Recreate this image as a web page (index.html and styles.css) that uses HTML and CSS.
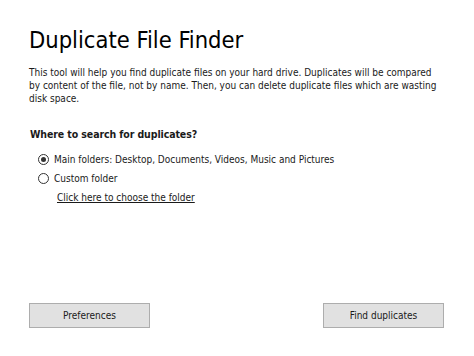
FILE: index.html
```html
<!DOCTYPE html>
<html lang="en">
<head>
    <meta charset="UTF-8">
    <title>Duplicate File Finder</title>
    <link rel="stylesheet" href="styles.css">
</head>
<body>
    <div class="window">
        <h1>Duplicate File Finder</h1>
        <p class="intro">This tool will help you find duplicate files on your hard drive. Duplicates will be compared by content of the file, not by name. Then, you can delete duplicate files which are wasting disk space.</p>

        <h2>Where to search for duplicates?</h2>
        <div class="options">
            <label class="option">
                <span class="radio checked"></span>
                Main folders: Desktop, Documents, Videos, Music and Pictures
            </label>
            <label class="option">
                <span class="radio"></span>
                Custom folder
            </label>
            <a class="choose-link" href="#">Click here to choose the folder</a>
        </div>

        <div class="footer">
            <button class="btn">Preferences</button>
            <button class="btn">Find duplicates</button>
        </div>
    </div>
</body>
</html>
```

FILE: styles.css
```css
html, body {
    margin: 0;
    height: 100%;
    background-color: white;
}
body {
    font-family: Tahoma, 'DejaVu Sans Condensed', 'DejaVu Sans', sans-serif;
    font-size: 10px;
    color: #1a1a1a;
}
.window {
    height: 100%;
    box-sizing: border-box;
    display: flex;
    flex-direction: column;
    padding: 26px 30px 28px 29px;
}
h1 {
    margin: 0;
    font-size: 23.5px;
    font-weight: normal;
    color: #000;
    line-height: 28px;
}
.intro {
    margin: 12px 0 0;
    max-width: 408px;
    line-height: 13px;
}
h2 {
    margin: 22px 0 0;
    padding-left: 1px;
    font-size: 10.5px;
    font-weight: bold;
    letter-spacing: -0.1px;
    line-height: 14px;
}
.options {
    margin-top: 9px;
    padding-left: 9px;
    display: flex;
    flex-direction: column;
}
.option {
    display: flex;
    align-items: center;
    gap: 5px;
    height: 19px;
}
.radio {
    width: 9px;
    height: 9px;
    border: 1px solid #333;
    border-radius: 50%;
    display: flex;
    align-items: center;
    justify-content: center;
}
.radio.checked::after {
    content: '';
    width: 5px;
    height: 5px;
    border-radius: 50%;
    background-color: #333;
}
.choose-link {
    margin-left: 19px;
    color: #1a1a1a;
    line-height: 20px;
}
.footer {
    margin-top: auto;
    display: flex;
    justify-content: space-between;
}
.btn {
    width: 121px;
    height: 25px;
    font-family: inherit;
    font-size: 10px;
    color: #1a1a1a;
    background-color: #e1e1e1;
    border: 1px solid #adadad;
    padding: 0;
}
```
